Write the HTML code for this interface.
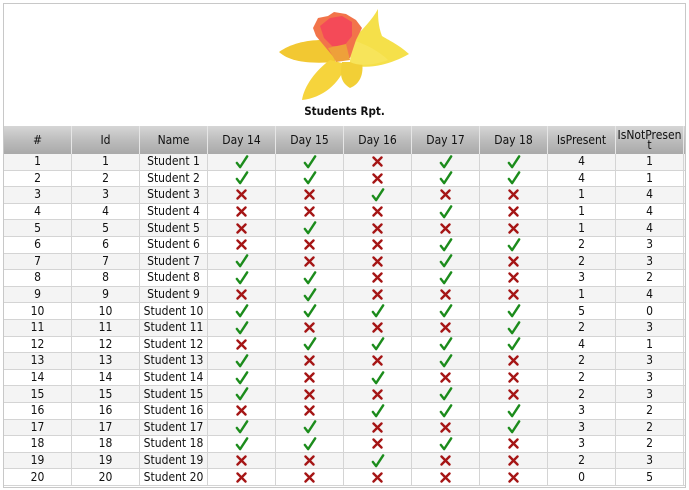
<!DOCTYPE html><html><head><style>
body{margin:0;background:#fff;width:689px;height:490px;overflow:hidden;font-family:"DejaVu Sans Condensed","DejaVu Sans","Liberation Sans",sans-serif;}
#box{position:absolute;left:3px;top:3px;width:681px;height:483px;border:1px solid #c8c8c8;}
#title{position:absolute;left:0;width:681px;top:100px;text-align:center;font-size:11.5px;font-weight:bold;color:#111;}
.hd{position:absolute;left:0;top:122px;width:681px;height:28px;display:flex;background:linear-gradient(#d6d6d6,#bdbdbd 50%,#a9a9a9);}
.hd div{width:68px;border-right:1px solid #e6e6e6;box-sizing:border-box;display:flex;align-items:center;justify-content:center;text-align:center;font-size:12px;line-height:10px;color:#111;}
.r{position:absolute;left:0;width:681px;height:16.6px;display:flex;border-bottom:1px solid #d4d4d4;box-sizing:border-box;}
.r.o{background:#f4f4f4}
.r div{width:68px;border-right:1px solid #d4d4d4;box-sizing:border-box;text-align:center;font-size:12px;line-height:15px;color:#111;display:flex;justify-content:center;align-items:center;}
</style></head><body>
<div id="box">
<div id="title">Students Rpt.</div>
<div class="hd"><div>#</div><div>Id</div><div>Name</div><div>Day 14</div><div>Day 15</div><div>Day 16</div><div>Day 17</div><div>Day 18</div><div>IsPresent</div><div>IsNotPresen<br>t</div></div>
<div id="rows"></div>
</div>
<svg style="position:absolute;left:0;top:0" width="689" height="110" viewBox="0 0 689 110">
<path d="M378 9 C372 20 362 30 352 40 L350 64 C364 70 388 66 409 54 C398 44 388 40 382 36 C378 26 378 16 378 9 Z" fill="#f5e04a"/>
<path d="M322 40 C306 40 290 44 279 52 C290 62 310 64 335 62 L336 44 Z" fill="#f2c832"/>
<path d="M330 60 C316 70 304 86 302 100 C322 98 340 84 346 64 Z" fill="#f6d43c"/>
<path d="M342 62 C340 74 340 82 350 88 C360 84 364 74 362 62 Z" fill="#f2cf36"/>
<path d="M352 40 C366 44 380 52 388 60 C372 66 358 66 350 62 Z" fill="#f7e45a"/>
<path d="M313 28 L318 18 L328 16 L334 12 L346 14 L356 20 L362 28 L356 40 L350 58 L336 60 L326 48 L316 36 Z" fill="#f2744a"/>
<path d="M320 26 L330 18 L342 16 L352 22 L352 36 L344 46 L332 46 L324 38 Z" fill="#f44a58"/>
<path d="M328 48 L346 44 L350 60 L336 62 Z" fill="#eea03a"/>
</svg>
<script>
var d=["YYNYY41","YYNYY41","NNYNN14","NNNYN14","NYNNN14","NNNYY23","YNNYN23","YYNYN32","NYNNN14","YYYYY50","YNNNY23","NYYYY41","YNNYN23","YNYNN23","YNNYN23","NNYYY32","YYNNY32","YYNYN32","NNYNN23","NNNNN05"];
var C='<svg width="14" height="14" viewBox="0 0 14 15"><path d="M1.5 8.5 L5 13 L12.5 1.5" fill="none" stroke="#1c8c1c" stroke-width="2.6" stroke-linecap="round" stroke-linejoin="round"/></svg>';
var X='<svg width="11" height="11" viewBox="0 0 11 11"><path d="M1.5 1.5 L9.5 9.5 M9.5 1.5 L1.5 9.5" stroke="#a51515" stroke-width="2.4" stroke-linecap="round"/></svg>';
var h='';
d.forEach(function(r,i){var n=i+1;h+='<div class="r'+(i%2==0?' o':'')+'" style="top:'+(150+i*16.6).toFixed(1)+'px"><div>'+n+'</div><div>'+n+'</div><div>Student '+n+'</div>';for(var k=0;k<5;k++)h+='<div>'+(r[k]=='Y'?C:X)+'</div>';h+='<div>'+r[5]+'</div><div>'+r[6]+'</div></div>';});
document.getElementById('rows').innerHTML=h;
</script>
</body></html>
